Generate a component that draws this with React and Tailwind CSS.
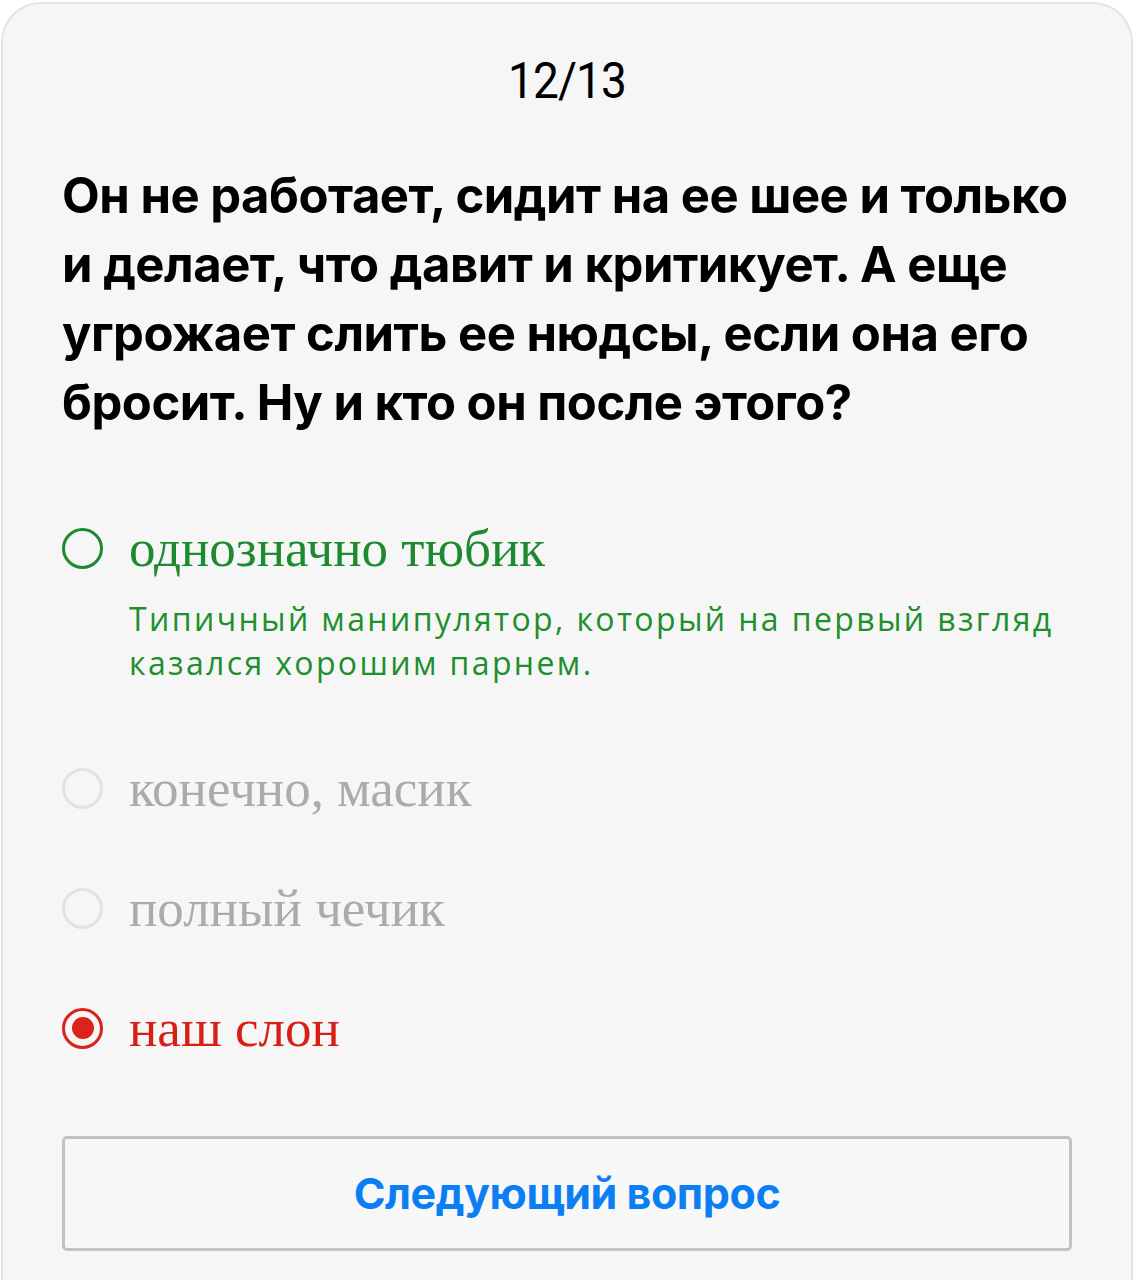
import React from 'react'

const options = [
  { label: 'однозначно тюбик', state: 'correct', note: 'Типичный манипулятор, который на первый взгляд казался хорошим парнем.' },
  { label: 'конечно, масик', state: 'idle' },
  { label: 'полный чечик', state: 'idle' },
  { label: 'наш слон', state: 'wrong' },
]

function Radio({ state }) {
  if (state === 'correct') {
    return <span className="block w-[41px] h-[41px] shrink-0 rounded-full border-[3px] border-[#1d8a2f]" />
  }
  if (state === 'wrong') {
    return (
      <span className="flex items-center justify-center w-[41px] h-[41px] shrink-0 rounded-full border-[3px] border-[#d8231a]">
        <span className="block w-[22px] h-[22px] rounded-full bg-[#dc2319]" />
      </span>
    )
  }
  return <span className="block w-[41px] h-[41px] shrink-0 rounded-full border-[3px] border-[#e2e2e2]" />
}

export default function App() {
  return (
    <div className="bg-white min-h-[1280px] pt-[2px] px-px overflow-hidden">
      <div className="bg-[#f6f6f6] border-2 border-[#e4e4e4] border-b-0 rounded-t-[40px] min-h-[1290px] pl-[59px] pr-[59px]">
        <div className="pt-[47px] text-center text-[50px] leading-[60px] text-black tracking-[-0.02em] font-['Roboto',sans-serif] scale-x-[0.92]">
          12/13
        </div>

        <h1 className="mt-[50px] text-[49px] leading-[69px] font-bold text-black tracking-[-0.01em] font-['Inter','Roboto',sans-serif]">
          Он не работает, сидит на ее шее и только и делает, что давит и критикует. А еще угрожает слить ее нюдсы, если она его бросит. Ну и кто он после этого?
        </h1>

        <div className="mt-[81px] flex flex-col">
          {options.map((o, i) => (
            <div key={i} className={i === 0 ? '' : i === 1 ? 'mt-[73px]' : 'mt-[60px]'}>
              <div className="flex items-center gap-[26px] h-[60px]">
                <Radio state={o.state} />
                <span
                  className={
                    "text-[53px] leading-[60px] font-['Liberation_Serif','Noto_Serif',serif] " +
                    (o.state === 'correct' ? 'text-[#1d8a2f]' : o.state === 'wrong' ? 'text-[#d61f17]' : 'text-[#ababab]')
                  }
                >
                  {o.label}
                </span>
              </div>
              {o.note && (
                <p className="mt-[19px] ml-[67px] pr-[10px] text-[32px] leading-[44px] tracking-[0.074em] text-[#1d8f2c] font-['Open_Sans',sans-serif]">
                  {o.note}
                </p>
              )}
            </div>
          ))}
        </div>

        <button className="mt-[78px] w-full h-[115px] border-[3px] border-[#c2c2c2] rounded-[5px] bg-[#f7f7f7] text-[43px] font-bold text-[#0b7ef4] tracking-[-0.01em] font-['Inter','Roboto',sans-serif]">
          Следующий вопрос
        </button>
      </div>
    </div>
  )
}
